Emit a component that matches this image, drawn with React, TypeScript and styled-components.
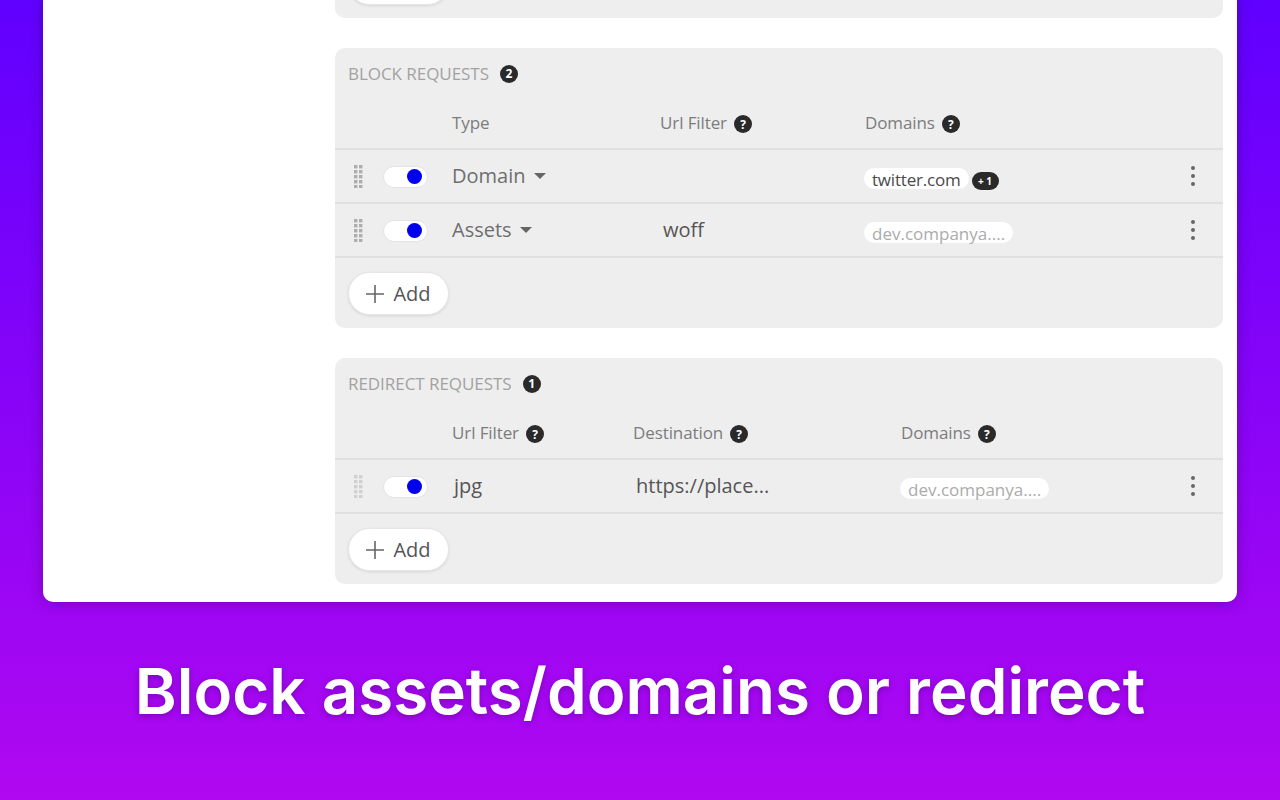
import React from "react";
import styled, { createGlobalStyle } from "styled-components";

const GlobalStyle = createGlobalStyle`
  html, body {
    margin: 0;
    padding: 0;
    height: 100%;
    overflow: hidden;
  }
  body {
    font-family: "Open Sans", "Liberation Sans", sans-serif;
  }
`;

const Stage = styled.div`
  width: 1280px;
  height: 800px;
  display: flex;
  flex-direction: column;
  background: linear-gradient(180deg, #6000ff 0%, #b008f0 100%);
`;

const Card = styled.div`
  flex: none;
  height: 602px;
  margin: 0 43px;
  box-sizing: border-box;
  padding: 0 14px 18px 292px;
  display: flex;
  flex-direction: column;
  justify-content: flex-end;
  gap: 30px;
  overflow: hidden;
  background: #fff;
  border-radius: 0 0 10px 10px;
  box-shadow: 0 0 14px rgba(0, 0, 0, 0.28);
`;

const Caption = styled.div`
  flex: 1;
  display: flex;
  align-items: center;
  justify-content: center;
  padding-bottom: 22px;
  color: #fff;
  font-family: "Inter", sans-serif;
  font-size: 63.7px;
  font-weight: 600;
  text-shadow: 0 2px 6px rgba(40, 0, 80, 0.35);
`;

const Section = styled.section`
  flex: none;
  background: #eee;
  border-radius: 10px;
`;

const SectionHeader = styled.div`
  height: 52px;
  box-sizing: border-box;
  padding: 0 13px 1px;
  display: flex;
  align-items: center;
  gap: 11px;
`;

const SectionTitle = styled.span`
  color: #a2a2a2;
  font-size: 17px;
  letter-spacing: -0.05px;
`;

const Count = styled.span`
  width: 18px;
  height: 18px;
  display: inline-flex;
  align-items: center;
  justify-content: center;
  border-radius: 50%;
  background: #2a2a2a;
  color: #fff;
  font-size: 12px;
  font-weight: 700;
`;

const Help = styled(Count)`
  margin-top: 3px;
`;

const Grid = styled.div<{ $columns: string }>`
  display: grid;
  grid-template-columns: ${(p) => p.$columns};
  align-items: center;
  border-bottom: 2px solid #e0e0e0;
`;

const HeadRow = styled(Grid)`
  height: 50px;
  padding-bottom: 3px;
  box-sizing: border-box;
`;

const BodyRow = styled(Grid)`
  height: 54px;
  box-sizing: border-box;
`;

const HeadCell = styled.div`
  display: flex;
  align-items: center;
  gap: 7px;
  color: #7c7c7c;
  font-size: 17px;
  letter-spacing: -0.1px;
`;

const Controls = styled.div`
  display: flex;
  align-items: center;
  padding: 1px 0 0 19px;
  gap: 20px;
`;

const Handle = styled.svg<{ $faint?: boolean }>`
  flex: none;
  margin-top: -1px;
  opacity: ${(p) => (p.$faint ? 0.45 : 1)};
`;

const Toggle = styled.span`
  flex: none;
  width: 45px;
  height: 22px;
  box-sizing: border-box;
  padding-right: 5px;
  display: flex;
  align-items: center;
  justify-content: flex-end;
  background: #fff;
  border: 1px solid #e4e4e4;
  border-radius: 11px;
`;

const Knob = styled.span`
  width: 15px;
  height: 15px;
  border-radius: 50%;
  background: #0000f0;
`;

const Select = styled.div`
  display: flex;
  align-items: center;
  gap: 8px;
  color: #6e6e6e;
  font-size: 20px;
  padding-bottom: 1px;
`;

const Caret = styled.span`
  width: 0;
  height: 0;
  border-left: 6px solid transparent;
  border-right: 6px solid transparent;
  border-top: 6px solid #666;
  margin-top: 1px;
`;

const Value = styled.div<{ $offset: number }>`
  color: #555;
  font-size: 20px;
  padding: 0 0 1px ${(p) => p.$offset}px;
  white-space: nowrap;
`;

const DomainCell = styled.div`
  display: flex;
  align-items: flex-end;
  gap: 3px;
  margin-left: -1px;
  padding-top: 4px;
`;

const Pill = styled.span<{ $muted?: boolean }>`
  height: 21px;
  box-sizing: border-box;
  padding: 2px 8px 0;
  display: inline-flex;
  align-items: center;
  background: #fff;
  border-radius: 11px;
  color: ${(p) => (p.$muted ? "#ababab" : "#4a4a4a")};
  font-size: 17px;
  letter-spacing: ${(p) => (p.$muted ? "0" : "-0.2px")};
`;

const More = styled.span`
  height: 18px;
  min-width: 27px;
  margin-bottom: -1px;
  display: inline-flex;
  align-items: center;
  justify-content: center;
  background: #2a2a2a;
  border-radius: 9px;
  color: #fff;
  font-size: 10px;
  font-weight: 700;
`;

const Menu = styled.div`
  display: flex;
  justify-content: center;
  padding-bottom: 1px;
`;

const Footer = styled.div`
  padding: 14px 13px 13px;
`;

const AddButton = styled.button`
  width: 101px;
  height: 43px;
  padding: 0;
  display: flex;
  align-items: center;
  justify-content: center;
  gap: 9px;
  background: #fff;
  border: 1px solid #e6e6e6;
  border-radius: 22px;
  box-shadow: 0 1px 3px rgba(0, 0, 0, 0.1);
  color: #555;
  font-family: inherit;
  font-size: 20px;
`;

const HelpIcon = () => <Help>?</Help>;

const PlusIcon = () => (
  <svg width="18" height="18" viewBox="0 0 18 18">
    <path d="M9 0v18M0 9h18" stroke="#666" strokeWidth="1.6" fill="none" />
  </svg>
);

const HandleIcon = ({ faint }: { faint?: boolean }) => (
  <Handle $faint={faint} width="9" height="23" viewBox="0 0 9 23" fill="#adadad">
    {[0, 5, 10, 15, 20].map((y) => (
      <React.Fragment key={y}>
        <rect x="0" y={y} width="3.4" height="3.4" />
        <rect x="5" y={y} width="3.4" height="3.4" />
      </React.Fragment>
    ))}
  </Handle>
);

const DotsIcon = () => (
  <svg width="6" height="20" viewBox="0 0 6 20" fill="#666">
    <circle cx="3" cy="2" r="2" />
    <circle cx="3" cy="10" r="2" />
    <circle cx="3" cy="18" r="2" />
  </svg>
);

const RowControls = ({ faint }: { faint?: boolean }) => (
  <Controls>
    <HandleIcon faint={faint} />
    <Toggle>
      <Knob />
    </Toggle>
  </Controls>
);

const AddRow = () => (
  <Footer>
    <AddButton>
      <PlusIcon />
      Add
    </AddButton>
  </Footer>
);

const blockColumns = "117px 208px 205px 1fr 60px";
const redirectColumns = "117px 181px 268px 1fr 60px";

export default function App() {
  return (
    <Stage>
      <GlobalStyle />
      <Card>
        {/* previous section scrolled off the top, only the button's lower edge shows */}
        <Section>
          <Footer>
            <AddButton aria-label="Add" />
          </Footer>
        </Section>

        <Section>
          <SectionHeader>
            <SectionTitle>BLOCK REQUESTS</SectionTitle>
            <Count>2</Count>
          </SectionHeader>
          <HeadRow $columns={blockColumns}>
            <div />
            <HeadCell>Type</HeadCell>
            <HeadCell>
              Url Filter <HelpIcon />
            </HeadCell>
            <HeadCell>
              Domains <HelpIcon />
            </HeadCell>
            <div />
          </HeadRow>
          <BodyRow $columns={blockColumns}>
            <RowControls />
            <Select>
              Domain <Caret />
            </Select>
            <div />
            <DomainCell>
              <Pill>twitter.com</Pill>
              <More>+ 1</More>
            </DomainCell>
            <Menu>
              <DotsIcon />
            </Menu>
          </BodyRow>
          <BodyRow $columns={blockColumns}>
            <RowControls />
            <Select>
              Assets <Caret />
            </Select>
            <Value $offset={3}>woff</Value>
            <DomainCell>
              <Pill $muted>dev.companya....</Pill>
            </DomainCell>
            <Menu>
              <DotsIcon />
            </Menu>
          </BodyRow>
          <AddRow />
        </Section>

        <Section>
          <SectionHeader>
            <SectionTitle>REDIRECT REQUESTS</SectionTitle>
            <Count>1</Count>
          </SectionHeader>
          <HeadRow $columns={redirectColumns}>
            <div />
            <HeadCell>
              Url Filter <HelpIcon />
            </HeadCell>
            <HeadCell>
              Destination <HelpIcon />
            </HeadCell>
            <HeadCell>
              Domains <HelpIcon />
            </HeadCell>
            <div />
          </HeadRow>
          <BodyRow $columns={redirectColumns}>
            <RowControls faint />
            <Value $offset={2}>jpg</Value>
            <Value $offset={3}>https://place...</Value>
            <DomainCell>
              <Pill $muted>dev.companya....</Pill>
            </DomainCell>
            <Menu>
              <DotsIcon />
            </Menu>
          </BodyRow>
          <AddRow />
        </Section>
      </Card>
      <Caption>Block assets/domains or redirect</Caption>
    </Stage>
  );
}
